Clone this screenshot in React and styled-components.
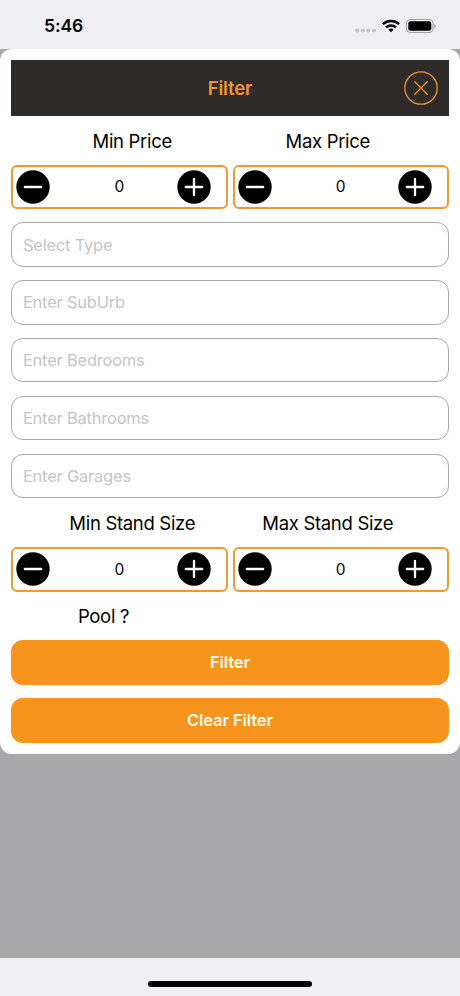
import React, {useState} from 'react';
import styled, {createGlobalStyle} from 'styled-components'

const GlobalStyle = createGlobalStyle`
  * {
    box-sizing: border-box;
  }
  body {
    margin: 0;
    background: #a8a8aa;
    font-family: Inter, "Liberation Sans", sans-serif;
    color: #000;
  }
  button, input {
    font-family: inherit;
  }
`

const Screen = styled.div`
  height: 996px;
  display: flex;
  flex-direction: column;
  background: #a8a8aa;
  overflow: hidden;
`

const StatusBar = styled.div`
  height: 49px;
  flex-shrink: 0;
  padding: 2px 24px 0 44px;
  display: flex;
  align-items: center;
  justify-content: space-between;
  background: #efeef3;
`

const Time = styled.span`
  font-size: 17.5px;
  font-weight: 600;
  letter-spacing: -0.1px;
`

const StatusIcons = styled.svg`
  width: 82px;
  height: 16px;
`

const Sheet = styled.div`
  height: 704.5px;
  flex-shrink: 0;
  padding: 11px 11.4px;
  display: flex;
  flex-direction: column;
  background: #fff;
  border-radius: 12px;
`

const Header = styled.div`
  height: 55.6px;
  padding: 0 11px;
  display: grid;
  grid-template-columns: 34px 1fr 34px;
  align-items: center;
  background: #302b2b;
`

const Title = styled.h1`
  grid-column: 2;
  margin: 0;
  text-align: center;
  font-size: 18.5px;
  font-weight: 600;
  letter-spacing: -0.15px;
  color: #f0962a;
`

const CloseButton = styled.button`
  width: 34px;
  height: 34px;
  padding: 0;
  display: flex;
  border: none;
  background: none;
  cursor: pointer;
`

const Labels = styled.div`
  height: 49.2px;
  padding-top: 1px;
  display: flex;
  align-items: center;
  justify-content: center;
`

const Label = styled.span`
  width: 195.5px;
  text-align: center;
  font-size: 18.5px;
  line-height: 22px;
  letter-spacing: -0.32px;
`

const PoolRow = styled.div`
  height: 48.6px;
  padding-left: 66.5px;
  display: flex;
  align-items: center;
`

const PoolLabel = styled.span`
  font-size: 18.5px;
  letter-spacing: -0.3px;
`

const Steppers = styled.div`
  display: grid;
  grid-template-columns: 1fr 1fr;
  gap: 5px;
`

const StepperBox = styled.div`
  height: 44.4px;
  padding: 0 15px 0 3px;
  display: flex;
  align-items: center;
  justify-content: space-between;
  border: 2px solid #ec9a35;
  border-radius: 6px;
`

const RoundButton = styled.button`
  width: 34px;
  height: 34px;
  padding: 0;
  display: flex;
  border: none;
  border-radius: 50%;
  background: none;
  cursor: pointer;
`

const Value = styled.span`
  flex: 1;
  padding-left: 12px;
  text-align: center;
  font-size: 15.5px;
`

const Fields = styled.div`
  margin: 13.2px 0 0;
  display: flex;
  flex-direction: column;
  gap: 13.3px;
`

const Field = styled.input`
  width: 100%;
  height: 44.5px;
  padding: 0 10.5px;
  border: 1px solid #a9a9ab;
  border-radius: 12px;
  background: #fff;
  font-size: 16.5px;
  letter-spacing: -0.22px;
  outline: none;

  &::placeholder {
    color: #c5c5c7;
    opacity: 1;
  }
`

const Actions = styled.div`
  display: flex;
  flex-direction: column;
  gap: 13.3px;
`

const Action = styled.button`
  height: 44.5px;
  padding: 0;
  border: none;
  border-radius: 12px;
  background: #f7941d;
  color: #fff9e8;
  font-size: 16.5px;
  font-weight: 600;
  letter-spacing: -0.1px;
  cursor: pointer;
`

const BottomBar = styled.div`
  height: 38px;
  flex-shrink: 0;
  margin-top: auto;
  padding-bottom: 9px;
  display: flex;
  align-items: flex-end;
  justify-content: center;
  background: #efeef3;
`

const HomeIndicator = styled.div`
  width: 164px;
  height: 6px;
  border-radius: 3px;
  background: #000;
`

const CloseIcon = () => (
  <svg width="34" height="34" viewBox="0 0 34 34" fill="none" stroke="#ee952b" strokeWidth="1.3" strokeLinecap="round">
    <circle cx="17" cy="17" r="16.2" />
    <path d="M10.8 10.8l12.4 12.4M23.2 10.8L10.8 23.2" />
  </svg>
)

const RoundIcon = ({plus}) => (
  <svg width="34" height="34" viewBox="0 0 34 34">
    <circle cx="17" cy="17" r="16.7" fill="#000" />
    <path
      d={plus ? 'M8.8 17h16.4M17 8.8v16.4' : 'M8.8 17h16.4'}
      stroke="#fff"
      strokeWidth="2.3"
      strokeLinecap="round"
    />
  </svg>
)

const Stepper = ({name}) => {
  const [value, setValue] = useState(0)

  return (
    <StepperBox>
      <RoundButton aria-label={`Decrease ${name}`} onClick={() => setValue(Math.max(0, value - 1))}>
        <RoundIcon />
      </RoundButton>
      <Value>{value}</Value>
      <RoundButton aria-label={`Increase ${name}`} onClick={() => setValue(value + 1)}>
        <RoundIcon plus />
      </RoundButton>
    </StepperBox>
  )
}

const fields = ['Select Type', 'Enter SubUrb', 'Enter Bedrooms', 'Enter Bathrooms', 'Enter Garages']

const App = () => {
  return (
    <Screen>
      <GlobalStyle />
      <StatusBar>
        <Time>5:46</Time>
        <StatusIcons viewBox="0 0 82 16">
          <g fill="#c2c2c6">
            <circle cx="3.3" cy="12.4" r="2" />
            <circle cx="8.8" cy="12.4" r="2" />
            <circle cx="14.3" cy="12.4" r="2" />
            <circle cx="19.9" cy="12.4" r="2" />
          </g>
          <g fill="none" stroke="#000" strokeWidth="2.5">
            <path d="M28.9 6.1a12 12 0 0 1 16.2 0" />
            <path d="M32 9.4a7.5 7.5 0 0 1 10 0" />
          </g>
          <path d="M34.4 11.7a4 4 0 0 1 5.2 0L37 14.3z" fill="#000" />
          <rect x="52.5" y="1.5" width="26.5" height="13" rx="4" fill="none" stroke="#a0a0a3" strokeWidth="1.1" />
          <rect x="54.3" y="3.2" width="23" height="9.6" rx="2.3" fill="#000" />
          <path d="M80.2 6v4.2c.9-.4 1.5-1.2 1.5-2.1s-.6-1.7-1.5-2.1z" fill="#a0a0a3" />
        </StatusIcons>
      </StatusBar>

      <Sheet>
        <Header>
          <Title>Filter</Title>
          <CloseButton aria-label="Close">
            <CloseIcon />
          </CloseButton>
        </Header>

        <Labels>
          <Label>Min Price</Label>
          <Label>Max Price</Label>
        </Labels>
        <Steppers>
          <Stepper name="min price" />
          <Stepper name="max price" />
        </Steppers>

        <Fields>
          {
            fields.map(item => (
              <Field key={item} placeholder={item} />
            ))
          }
        </Fields>

        <Labels>
          <Label>Min Stand Size</Label>
          <Label>Max Stand Size</Label>
        </Labels>
        <Steppers>
          <Stepper name="min stand size" />
          <Stepper name="max stand size" />
        </Steppers>

        <PoolRow>
          <PoolLabel>Pool ?</PoolLabel>
        </PoolRow>

        <Actions>
          <Action>Filter</Action>
          <Action>Clear Filter</Action>
        </Actions>
      </Sheet>

      <BottomBar>
        <HomeIndicator />
      </BottomBar>
    </Screen>
  )
}

export default App
